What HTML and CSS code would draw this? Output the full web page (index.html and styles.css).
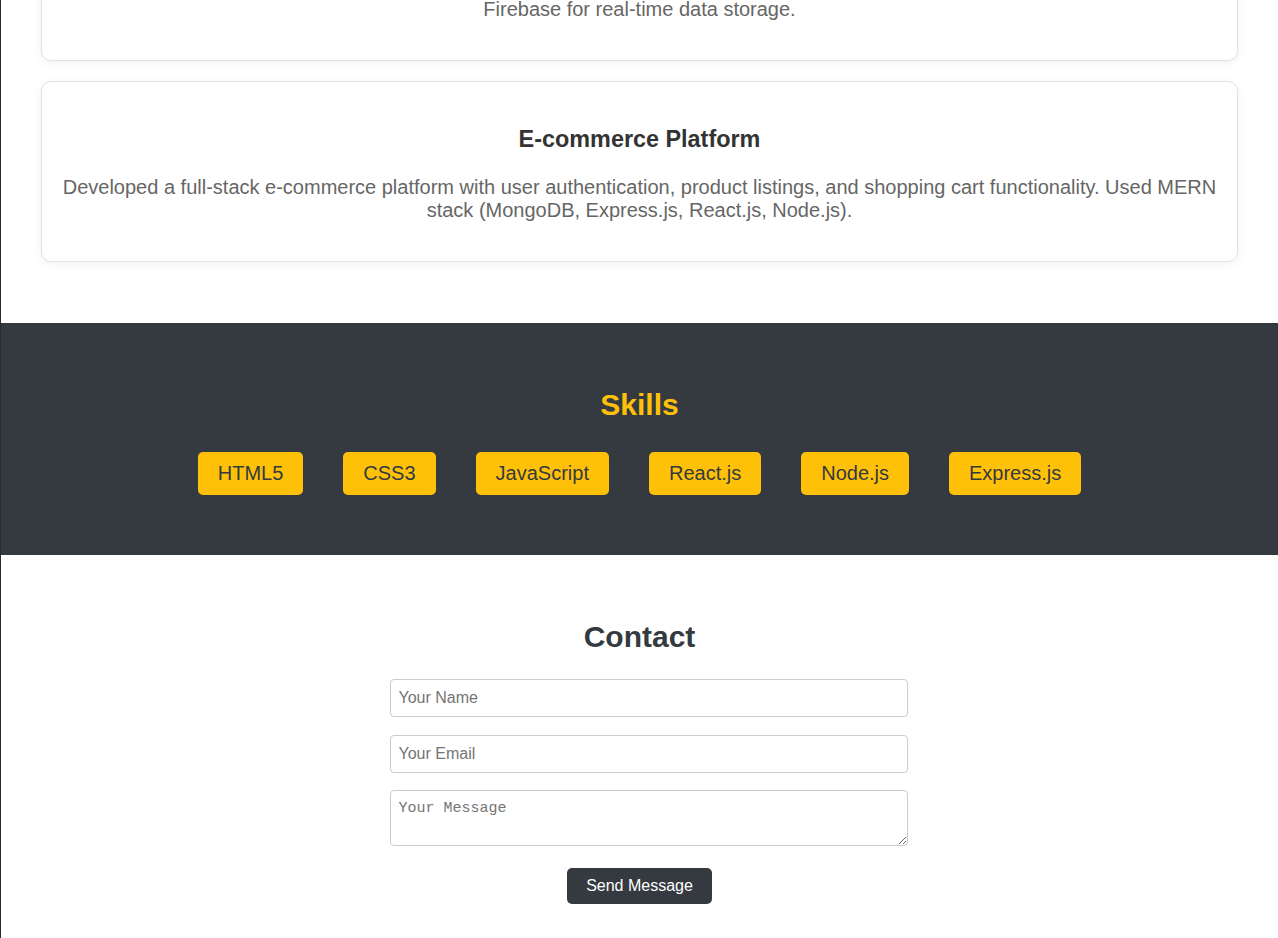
FILE: index.html
```html
<!DOCTYPE html>
<html lang="en">
<head>
<meta charset="utf-8">
<title>Portfolio</title>
<link rel="stylesheet" href="styles.css">
</head>
<body>
  <section class="projects">
    <div class="card card-first">
      <p>Firebase for real-time data storage.</p>
    </div>
    <div class="card">
      <h3>E-commerce Platform</h3>
      <p>Developed a full-stack e-commerce platform with user authentication, product listings, and shopping cart functionality. Used MERN stack (MongoDB, Express.js, React.js, Node.js).</p>
    </div>
  </section>

  <section class="skills">
    <h2>Skills</h2>
    <div class="skill-list">
      <span class="skill">HTML5</span>
      <span class="skill">CSS3</span>
      <span class="skill">JavaScript</span>
      <span class="skill">React.js</span>
      <span class="skill">Node.js</span>
      <span class="skill">Express.js</span>
    </div>
  </section>

  <section class="contact">
    <h2>Contact</h2>
    <form class="contact-form">
      <input class="field" type="text" placeholder="Your Name">
      <input class="field" type="email" placeholder="Your Email">
      <textarea class="field field-area" rows="2" placeholder="Your Message"></textarea>
      <button class="send" type="button">Send Message</button>
    </form>
  </section>
</body>
</html>
```

FILE: styles.css
```css
* { box-sizing: content-box; }

html, body {
  margin: 0;
  padding: 0;
  background: #ffffff;
}

body {
  font-family: "Liberation Sans", Arial, sans-serif;
  color: #333333;
  border-left: 1px solid #2b2b2b;
  overflow: hidden;
}

.projects {
  padding: 0 40px 61px;
}

.card {
  background: #ffffff;
  border: 1px solid #e2e2e2;
  border-radius: 10px;
  box-shadow: 0 2px 10px rgba(0, 0, 0, 0.06);
  padding: 20px;
  margin-bottom: 20px;
  text-align: center;
}

.card:last-child { margin-bottom: 0; }

.card-first {
  margin-top: -23px;
}

.card h3 {
  font-size: 23.4px;
  line-height: 27px;
  font-weight: bold;
  color: #333333;
  margin: 24px 0 23px;
}

.card p {
  font-size: 20px;
  line-height: 23px;
  color: #666666;
  margin: 0 0 19px;
}

.skills {
  background: #343a40;
  padding: 40px 0;
  text-align: center;
}

.skills h2 {
  font-size: 30px;
  line-height: 34px;
  color: #ffc107;
  margin: 25px 0 30px;
}

.skill-list {
  display: flex;
  justify-content: center;
  gap: 40px;
  margin-bottom: 20px;
}

.skill {
  background: #ffc107;
  color: #343a40;
  font-size: 20px;
  line-height: 23px;
  padding: 10px 20px;
  border-radius: 5px;
}

.contact {
  padding: 40px 0 40px;
  text-align: center;
}

.contact h2 {
  font-size: 30px;
  line-height: 34px;
  color: #343a40;
  margin: 25px 0 25px;
}

.contact-form {
  width: 500px;
  margin: 0 auto;
  text-align: left;
}

.field {
  display: block;
  width: 100%;
  height: 20px;
  padding: 8px;
  margin: 0 0 17.5px;
  border: 1px solid #cccccc;
  border-radius: 4px;
  font-family: "Liberation Sans", Arial, sans-serif;
  font-size: 16px;
  color: #333333;
  background: #ffffff;
  outline: none;
}

.field::placeholder {
  color: #757575;
}

.field-area {
  height: 38px;
  font-family: "Liberation Mono", "DejaVu Sans Mono", monospace;
  font-size: 15px;
  line-height: 19px;
  margin-bottom: 22px;
  resize: both;
}

.send {
  display: block;
  margin: 0 auto;
  height: 36px;
  padding: 0 19px;
  background: #343a40;
  color: #ffffff;
  border: none;
  border-radius: 5px;
  font-family: "Liberation Sans", Arial, sans-serif;
  font-size: 16px;
  cursor: pointer;
}
```
